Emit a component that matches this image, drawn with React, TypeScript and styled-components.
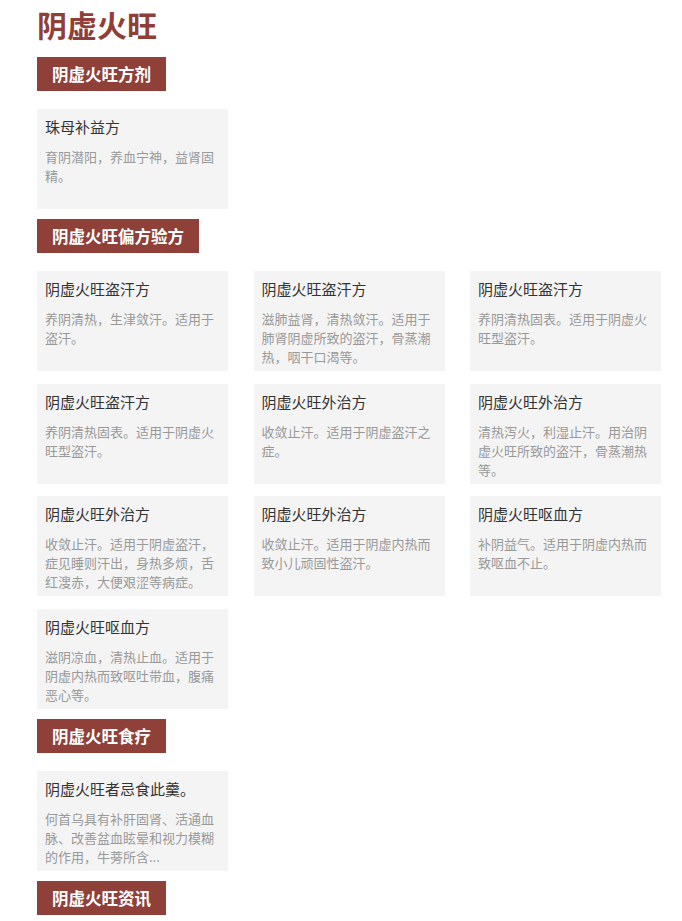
import styled, { createGlobalStyle } from 'styled-components'

const GlobalStyle = createGlobalStyle`
  body {
    margin: 0;
    background: #fff;
    font-family: 'Noto Sans CJK SC', 'Noto Sans', sans-serif;
  }
`

const Page = styled.div`
  width: 624px;
  padding: 6px 0 0 37px;
`

const Title = styled.h1`
  margin: 0 0 15px;
  font-size: 30px;
  line-height: 36px;
  font-weight: 700;
  color: #8f3f38;
`

const SectionHead = styled.div`
  display: inline-block;
  height: 34px;
  line-height: 34px;
  padding: 0 15px;
  background: #8f4039;
  color: #fff;
  font-size: 16.5px;
  font-weight: 700;
  vertical-align: top;
`

const CardGrid = styled.div`
  display: grid;
  grid-template-columns: repeat(3, 191px);
  justify-content: space-between;
  row-gap: 12.5px;
  margin: 18px 0 10px;
`

const Card = styled.div`
  height: 100px;
  box-sizing: border-box;
  padding: 8px 8px 0;
  background: #f4f4f4;
  overflow: hidden;
`

const CardTitle = styled.div`
  font-size: 15px;
  line-height: 20px;
  color: #333;
  margin-bottom: 10px;
`

const CardDesc = styled.div`
  font-size: 13px;
  line-height: 19px;
  color: #999;
`

interface Item {
  title: string
  desc: string
}

interface Section {
  name: string
  items: Item[]
}

const sections: Section[] = [
  {
    name: '阴虚火旺方剂',
    items: [{ title: '珠母补益方', desc: '育阴潜阳，养血宁神，益肾固精。' }],
  },
  {
    name: '阴虚火旺偏方验方',
    items: [
      { title: '阴虚火旺盗汗方', desc: '养阴清热，生津敛汗。适用于盗汗。' },
      { title: '阴虚火旺盗汗方', desc: '滋肺益肾，清热敛汗。适用于肺肾阴虚所致的盗汗，骨蒸潮热，咽干口渴等。' },
      { title: '阴虚火旺盗汗方', desc: '养阴清热固表。适用于阴虚火旺型盗汗。' },
      { title: '阴虚火旺盗汗方', desc: '养阴清热固表。适用于阴虚火旺型盗汗。' },
      { title: '阴虚火旺外治方', desc: '收敛止汗。适用于阴虚盗汗之症。' },
      { title: '阴虚火旺外治方', desc: '清热泻火，利湿止汗。用治阴虚火旺所致的盗汗，骨蒸潮热等。' },
      { title: '阴虚火旺外治方', desc: '收敛止汗。适用于阴虚盗汗，症见睡则汗出，身热多烦，舌红溲赤，大便艰涩等病症。' },
      { title: '阴虚火旺外治方', desc: '收敛止汗。适用于阴虚内热而致小儿顽固性盗汗。' },
      { title: '阴虚火旺呕血方', desc: '补阴益气。适用于阴虚内热而致呕血不止。' },
      { title: '阴虚火旺呕血方', desc: '滋阴凉血，清热止血。适用于阴虚内热而致呕吐带血，腹痛恶心等。' },
    ],
  },
  {
    name: '阴虚火旺食疗',
    items: [
      { title: '阴虚火旺者忌食此羹。', desc: '何首乌具有补肝固肾、活通血脉、改善盆血眩晕和视力模糊的作用，牛蒡所含...' },
    ],
  },
  { name: '阴虚火旺资讯', items: [] },
]

export default function App() {
  return (
    <>
      <GlobalStyle />
      <Page>
        <Title>阴虚火旺</Title>
        {sections.map(section => (
          <div key={section.name}>
            <SectionHead>{section.name}</SectionHead>
            {section.items.length > 0 && (
              <CardGrid>
                {section.items.map((item, i) => (
                  <Card key={i}>
                    <CardTitle>{item.title}</CardTitle>
                    <CardDesc>{item.desc}</CardDesc>
                  </Card>
                ))}
              </CardGrid>
            )}
          </div>
        ))}
      </Page>
    </>
  )
}
